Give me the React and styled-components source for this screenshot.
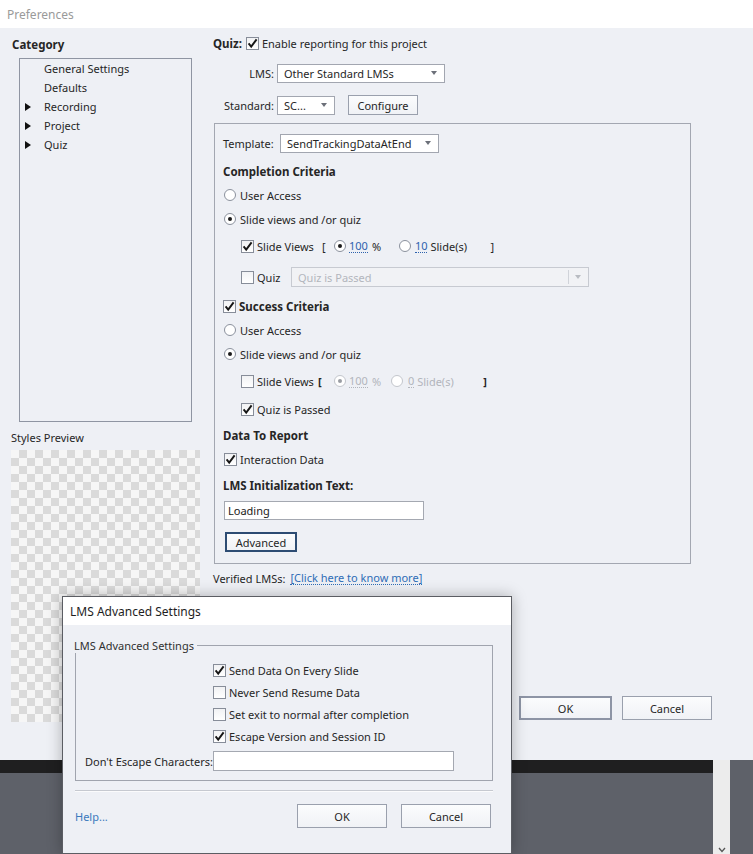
import styled, { createGlobalStyle, css } from "styled-components";

const GlobalStyle = createGlobalStyle`
  html, body { margin: 0; padding: 0; }
  body {
    font-family: "Noto Sans", "Open Sans", sans-serif;
    font-size: 11px;
    color: #262626;
    background: #5e6169;
  }
`;

const Screen = styled.div`
  position: relative;
  width: 753px;
  height: 854px;
  overflow: hidden;
  display: flex;
  flex-direction: column;
`;

const Window = styled.div`
  height: 760px;
  flex-shrink: 0;
  background: #eef0f5;
  display: flex;
  flex-direction: column;
`;

const TitleBar = styled.div`
  height: 28px;
  flex-shrink: 0;
  background: #fff;
  color: #9a9a9a;
  font-size: 12px;
  padding-left: 7px;
  display: flex;
  align-items: center;
`;

const Body = styled.div`
  flex: 1;
  display: flex;
`;

const Sidebar = styled.div`
  width: 202px;
  padding-left: 11px;
  display: flex;
  flex-direction: column;
`;

const Main = styled.div`
  flex: 1;
  display: flex;
  flex-direction: column;
  padding-right: 41px;
`;

const Row = styled.div`
  display: flex;
  align-items: center;
  height: ${(p) => p.$h || 20}px;
  margin-top: ${(p) => p.$mt || 0}px;
  padding-left: ${(p) => p.$pl || 0}px;
  white-space: nowrap;
`;

const Heading = styled.span`
  font-weight: bold;
  font-size: 11.5px;
  margin-left: ${(p) => p.$ml || 0}px;
`;

const Label = styled.span`
  display: inline-block;
  width: ${(p) => (p.$w ? p.$w + "px" : "auto")};
  margin-left: ${(p) => p.$ml || 0}px;
  text-align: ${(p) => p.$align || "left"};
  color: ${(p) => (p.$dim ? "#b2b5bc" : "inherit")};
  font-weight: ${(p) => (p.$bold ? "bold" : "normal")};
`;

/* ---------- sidebar ---------- */

const Tree = styled.div`
  margin: 4px 0 0 8px;
  width: 171px;
  height: 362px;
  border: 1px solid #8f95a2;
`;

const TreeItem = styled.div`
  height: 19px;
  display: flex;
  align-items: center;
  padding-left: 5px;
`;

const Twisty = styled.span`
  width: 19px;
  flex-shrink: 0;
  &::before {
    content: "";
    display: ${(p) => (p.$show ? "block" : "none")};
    width: 0;
    height: 0;
    border-top: 4px solid transparent;
    border-bottom: 4px solid transparent;
    border-left: 6px solid #111;
  }
`;

const Checker = styled.div`
  margin-top: 3px;
  width: 189px;
  height: 272px;
  background: repeating-conic-gradient(#dadada 0 25%, #f6f6f6 0 50%) 0 0 / 16px 16px;
`;

/* ---------- controls ---------- */

const Box = styled.span`
  width: 11px;
  height: 11px;
  flex-shrink: 0;
  border: 1px solid #878d99;
  background: linear-gradient(#f1f2f4, #fff);
  display: inline-flex;
  align-items: center;
  justify-content: center;
  margin-left: ${(p) => p.$ml || 0}px;
  margin-right: ${(p) => (p.$mr === undefined ? 3 : p.$mr)}px;
`;

function Check({ on, ml, mr }) {
  return (
    <Box $ml={ml} $mr={mr}>
      {on && (
        <svg width="11" height="11" viewBox="0 0 11 11">
          <path d="M1.6 5.4 L4.2 8.6 L9.6 1.4" fill="none" stroke="#161616" strokeWidth="1.9" />
        </svg>
      )}
    </Box>
  );
}

const Radio = styled.span`
  width: 10px;
  height: 10px;
  flex-shrink: 0;
  border-radius: 50%;
  border: 1px solid ${(p) => (p.$dim ? "#c3c6cc" : "#8b919d")};
  background: #fff;
  display: inline-flex;
  align-items: center;
  justify-content: center;
  margin-left: ${(p) => p.$ml || 0}px;
  margin-right: ${(p) => (p.$mr === undefined ? 4 : p.$mr)}px;
  &::after {
    content: "";
    display: ${(p) => (p.$on ? "block" : "none")};
    width: 4px;
    height: 4px;
    border-radius: 50%;
    background: ${(p) => (p.$dim ? "#9a9da3" : "#1a1a1a")};
  }
`;

const Num = styled.span`
  color: ${(p) => (p.$dim ? "#b2b5bc" : "#2d62ad")};
  border-bottom: 1px dotted ${(p) => (p.$dim ? "#b2b5bc" : "#2d62ad")};
  line-height: 13px;
`;

const SelectBox = styled.div`
  width: ${(p) => p.$w}px;
  height: ${(p) => p.$h || 19}px;
  box-sizing: border-box;
  margin-left: ${(p) => p.$ml || 0}px;
  border: 1px solid ${(p) => (p.$dim ? "#c7cad1" : "#a2a6b0")};
  background: ${(p) => (p.$dim ? "#f1f2f5" : "#fff")};
  color: ${(p) => (p.$dim ? "#b3b6bd" : "#262626")};
  display: flex;
  align-items: center;
  padding-left: 6px;
`;

const Caret = styled.span`
  margin-left: auto;
  margin-right: 7px;
  width: 0;
  height: 0;
  border-left: 3.5px solid transparent;
  border-right: 3.5px solid transparent;
  border-top: 4px solid ${(p) => (p.$dim ? "#b9bcc2" : "#6c7079")};
`;

const Divider = styled.span`
  width: 1px;
  height: 14px;
  background: #d0d3d9;
  margin-left: auto;
  margin-right: 6px;
  & + ${Caret} {
    margin-left: 0;
  }
`;

function Select({ w, ml, h, dim, split, children }) {
  return (
    <SelectBox $w={w} $ml={ml} $h={h} $dim={dim}>
      {children}
      {split && <Divider />}
      <Caret $dim={dim} />
    </SelectBox>
  );
}

const Button = styled.button`
  width: ${(p) => p.$w}px;
  height: ${(p) => p.$h || 20}px;
  margin-left: ${(p) => p.$ml || 0}px;
  box-sizing: border-box;
  padding: 0;
  font: inherit;
  color: #262626;
  background: linear-gradient(#fbfcfd, #f0f2f6);
  border: 1px solid #9aa0ad;
  ${(p) =>
    p.$default &&
    css`
      border: 2px solid #8d94a5;
    `}
  ${(p) =>
    p.$focus &&
    css`
      border: 2px solid #2d4c73;
    `}
`;

const Input = styled.div`
  width: ${(p) => p.$w}px;
  height: ${(p) => p.$h || 19}px;
  box-sizing: border-box;
  margin-left: ${(p) => p.$ml || 0}px;
  border: 1px solid #a4a8b1;
  background: #fff;
  padding-left: 3px;
  display: flex;
  align-items: center;
  color: #1a1a1a;
`;

const Group = styled.div`
  margin: 8px 0 0 1px;
  width: 459px;
  border: 1px solid #a3a7b1;
  padding: 9px 8px 11px;
  display: flex;
  flex-direction: column;
`;

const Link = styled.span`
  color: #2f6db6;
  border-bottom: 1px dotted #2f6db6;
  line-height: 13px;
  margin-left: ${(p) => p.$ml || 0}px;
`;

const ButtonBar = styled.div`
  display: flex;
  justify-content: flex-end;
  margin-top: ${(p) => p.$mt || 0}px;
  gap: ${(p) => p.$gap || 10}px;
`;

/* ---------- backdrop ---------- */

const Backdrop = styled.div`
  flex: 1;
  display: flex;
  background: #5e6169;
`;

const AppArea = styled.div`
  width: 713px;
  display: flex;
  flex-direction: column;
`;

const DarkBar = styled.div`
  height: 13px;
  background: #1f1f20;
`;

const Strip = styled.div`
  width: 17px;
  background: #ececec;
  display: flex;
  align-items: flex-end;
  justify-content: center;
  padding-bottom: 1px;
`;

/* ---------- dialog ---------- */

const Dialog = styled.div`
  position: absolute;
  left: 62px;
  top: 596px;
  width: 448px;
  height: 256px;
  border: 1px solid #5b5d63;
  background: #eef0f5;
  box-shadow: 0 0 14px rgba(0, 0, 0, 0.28);
  display: flex;
  flex-direction: column;
`;

const DialogTitle = styled.div`
  height: 28px;
  flex-shrink: 0;
  background: #fff;
  padding-left: 7px;
  font-size: 12px;
  color: #1e1e1e;
  display: flex;
  align-items: center;
`;

const DialogBody = styled.div`
  padding: 0 18px 0 12px;
  display: flex;
  flex-direction: column;
`;

const Fieldset = styled.fieldset`
  margin: 13px 0 0;
  padding: 6px 0 9px;
  border: 1px solid #a0a4ae;
  min-width: 0;
  & > legend {
    padding: 0 3px 0 0;
    margin-left: -2px;
    font-size: 11px;
    color: #303030;
  }
`;

const Separator = styled.div`
  margin-top: 9px;
  border-top: 1px solid #c6c9d0;
  border-bottom: 1px solid #fbfbfc;
`;

const Footer = styled.div`
  display: flex;
  align-items: center;
  margin-top: 12px;
  padding-right: 2px;
`;

const Help = styled.span`
  color: #3b79bd;
  margin-right: auto;
`;

const treeItems = [
  ["General Settings", false],
  ["Defaults", false],
  ["Recording", true],
  ["Project", true],
  ["Quiz", true],
];

const advanced = [
  ["Send Data On Every Slide", true],
  ["Never Send Resume Data", false],
  ["Set exit to normal after completion", false],
  ["Escape Version and Session ID", true],
];

export default function App() {
  return (
    <Screen>
      <GlobalStyle />
      <Window>
        <TitleBar>Preferences</TitleBar>
        <Body>
          <Sidebar>
            <Row $mt={6}>
              <Heading $ml={1}>Category</Heading>
            </Row>
            <Tree>
              {treeItems.map(([name, kids]) => (
                <TreeItem key={name}>
                  <Twisty $show={kids} />
                  {name}
                </TreeItem>
              ))}
            </Tree>
            <Row $mt={5}>Styles Preview</Row>
            <Checker />
          </Sidebar>

          <Main>
            <Row $mt={5}>
              <Heading>Quiz:</Heading>
              <Check on ml={4} />
              Enable reporting for this project
            </Row>
            <Row $mt={10}>
              <Label $w={61} $align="right">LMS:</Label>
              <Select w={168} ml={3}>Other Standard LMSs</Select>
            </Row>
            <Row $mt={12}>
              <Label $w={61} $align="right">Standard:</Label>
              <Select w={58} ml={3}>SC...</Select>
              <Button $w={70} $ml={13}>Configure</Button>
            </Row>

            <Group>
              <Row>
                <Label $w={50}>Template:</Label>
                <Select w={159} ml={7}>SendTrackingDataAtEnd</Select>
              </Row>
              <Row $mt={8}>
                <Heading>Completion Criteria</Heading>
              </Row>
              <Row $mt={4} $pl={1}>
                <Radio />
                User Access
              </Row>
              <Row $mt={4} $pl={1}>
                <Radio $on />
                Slide views and /or quiz
              </Row>
              <Row $mt={7} $pl={18}>
                <Check on />
                <Label $w={65}>Slide Views</Label>
                <Label $w={12}>[</Label>
                <Radio $on $mr={3} />
                <Num>100</Num>
                <Label $w={27} $ml={4}>%</Label>
                <Radio $mr={4} />
                <Num>10</Num>
                <Label $w={60} $ml={3}>Slide(s)</Label>
                <Label>]</Label>
              </Row>
              <Row $mt={11} $pl={18}>
                <Check />
                <Label $w={34}>Quiz</Label>
                <Select w={298} h={20} dim split>
                  Quiz is Passed
                </Select>
              </Row>
              <Row $mt={9}>
                <Check on />
                <Heading>Success Criteria</Heading>
              </Row>
              <Row $mt={4} $pl={1}>
                <Radio />
                User Access
              </Row>
              <Row $mt={4} $pl={1}>
                <Radio $on />
                Slide views and /or quiz
              </Row>
              <Row $mt={7} $pl={18}>
                <Check />
                <Label $w={61}>Slide Views</Label>
                <Label $w={16} $bold>[</Label>
                <Radio $on $dim $mr={3} />
                <Num $dim>100</Num>
                <Label $w={19} $ml={4} $dim>%</Label>
                <Radio $dim $mr={5} />
                <Num $dim>0</Num>
                <Label $w={66} $ml={3} $dim>Slide(s)</Label>
                <Label $bold>]</Label>
              </Row>
              <Row $mt={8} $pl={18}>
                <Check on />
                Quiz is Passed
              </Row>
              <Row $mt={6}>
                <Heading>Data To Report</Heading>
              </Row>
              <Row $mt={4} $pl={1}>
                <Check on />
                Interaction Data
              </Row>
              <Row $mt={6}>
                <Heading>LMS Initialization Text:</Heading>
              </Row>
              <Row $mt={5}>
                <Input $w={200} $ml={1}>Loading</Input>
              </Row>
              <Row $mt={12}>
                <Button $w={72} $ml={2} $focus>
                  Advanced
                </Button>
              </Row>
            </Group>

            <Row $mt={4}>
              Verified LMSs:
              <Link $ml={5}>[Click here to know more]</Link>
            </Row>

            <ButtonBar $mt={108}>
              <Button $w={93} $h={24} $default>
                OK
              </Button>
              <Button $w={90} $h={24}>
                Cancel
              </Button>
            </ButtonBar>
          </Main>
        </Body>
      </Window>

      <Backdrop>
        <AppArea>
          <DarkBar />
        </AppArea>
        <Strip>
          <svg width="8" height="6" viewBox="0 0 8 6">
            <path d="M1 1 L4 4.5 L7 1" fill="none" stroke="#555" strokeWidth="1.3" />
          </svg>
        </Strip>
      </Backdrop>

      <Dialog>
        <DialogTitle>LMS Advanced Settings</DialogTitle>
        <DialogBody>
          <Fieldset>
            <legend>LMS Advanced Settings</legend>
            {advanced.map(([text, on]) => (
              <Row key={text} $h={22} $pl={137}>
                <Check on={on} />
                {text}
              </Row>
            ))}
            <Row $mt={4} $pl={9}>
              <Label $w={128}>Don&apos;t Escape Characters:</Label>
              <Input $w={241} $h={20} />
            </Row>
          </Fieldset>
          <Separator />
          <Footer>
            <Help>Help...</Help>
            <Button $w={90} $h={24}>
              OK
            </Button>
            <Button $w={90} $h={24} $ml={14}>
              Cancel
            </Button>
          </Footer>
        </DialogBody>
      </Dialog>
    </Screen>
  );
}
